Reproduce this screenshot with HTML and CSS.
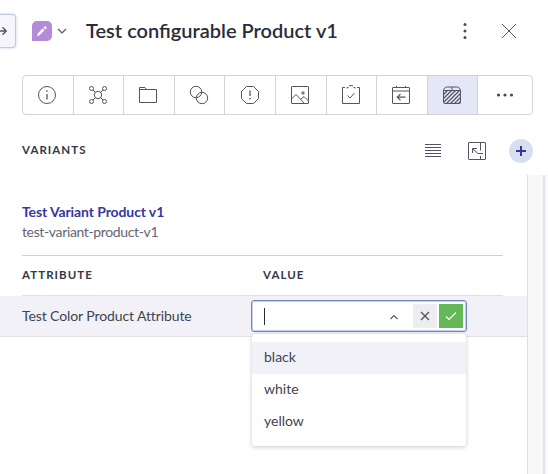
FILE: index.html
```html
<!DOCTYPE html>
<html lang="en">
<head>
<meta charset="utf-8">
<title>Test configurable Product v1</title>
<link rel="stylesheet" href="styles.css">
</head>
<body>
<header class="header">
  <button class="collapse"><svg width="10" height="12" viewBox="0 0 10 12"><path d="M0 6h8M4.500 2.200 8.300 6 4.500 9.800" stroke-width="1.300"/></svg></button>
  <span class="badge"><svg width="20" height="20" viewBox="0 0 20 20"><path class="white" d="M5 15l.8-2.600 4.800-4.800 1.800 1.800-4.800 4.800zM11.400 6.800l1.300-1.300q.5-.4 1 0l.8.8q.4.500 0 1L13.200 8.600z"/></svg></span>
  <svg class="chevron" width="10" height="6" viewBox="0 0 10 6"><path d="M1 1l4 4 4-4" stroke-width="1.200"/></svg>
  <h1 class="title">Test configurable Product v1</h1>
  <svg class="more" width="4" height="18" viewBox="0 0 4 18"><g class="solid"><circle cx="2" cy="2.500" r="1.500"/><circle cx="2" cy="9" r="1.500"/><circle cx="2" cy="15.500" r="1.500"/></g></svg>
  <svg class="close" width="16" height="16" viewBox="0 0 16 16"><path d="M1 1l14 14M15 1 1 15"/></svg>
</header>

<nav class="tabs">
  <span class="tab"><svg width="20" height="20" viewBox="0 0 20 20"><circle cx="10" cy="10" r="8.500"/><path d="M10 9v5.500" stroke-width="1.300"/><path d="M10 5.300v1.400" stroke-width="1.300"/></svg></span>
  <span class="tab"><svg width="20" height="20" viewBox="0 0 20 20"><circle cx="10" cy="10" r="3.700"/><circle cx="3.500" cy="3.500" r="2"/><circle cx="16.500" cy="3.500" r="2"/><circle cx="3.500" cy="16.500" r="2"/><circle cx="16.500" cy="16.500" r="2"/><path d="M5 5l2.400 2.400M15 5l-2.400 2.400M5 15l2.400-2.400M15 15l-2.400-2.400"/></svg></span>
  <span class="tab"><svg width="20" height="20" viewBox="0 0 20 20"><path d="M1.500 17.500v-15h5.500l1.500 2h10v13zM1.500 4.500h7"/></svg></span>
  <span class="tab"><svg width="20" height="20" viewBox="0 0 20 20"><circle cx="7" cy="7" r="5.700"/><circle cx="13" cy="13" r="5.700"/></svg></span>
  <span class="tab"><svg width="20" height="20" viewBox="0 0 20 20"><path d="M6.500 1.500h7l5 5v7l-5 5h-7l-5-5v-7z"/><path d="M10 5.500v5.500M10 13v1.500" stroke-width="1.300"/></svg></span>
  <span class="tab"><svg width="20" height="20" viewBox="0 0 20 20"><rect x="1.500" y="1.500" width="17" height="17" rx=".5"/><path d="M1.500 14 6 9.500l8.500 9M11 14l3-2.500 4.500 4.500"/><circle class="solid" cx="13" cy="8" r="1.700" opacity=".75"/></svg></span>
  <span class="tab"><svg width="20" height="20" viewBox="0 0 20 20"><path d="M4 2.500H1.500v16h17v-16H16M6 3.500V2.500h1.500M14 3.500V2.500h-1.500M8 .7h4"/><path d="M6.500 10.500 9 13l4.500-5"/></svg></span>
  <span class="tab"><svg width="20" height="20" viewBox="0 0 20 20"><rect x="1.500" y="2.500" width="17" height="16" rx=".5"/><path d="M1.500 6h17M5.500 1v1.500M14.500 1v1.500"/><path d="M14.500 12.200H6.500M9.500 9l-3.200 3.200 3.200 3.200" stroke-width="1.200"/></svg></span>
  <span class="tab active"><svg width="20" height="20" viewBox="0 0 20 20"><path d="M1.500 5.500v12q0 1 1 1h15q1 0 1-1v-12zM1.500 5.500q0-2.500 3-3.500h11q3 1 3 3.500M10 2v3.500"/><path d="M1.500 9.500l4-4M1.500 13.500l8-8M1.500 17.500l12-12M4.500 18.500l13-13M8.500 18.500l10-10M12.500 18.500l6-6M16.500 18.500l2-2" stroke-width="1.200"/></svg></span>
  <span class="tab last"><svg width="20" height="20" viewBox="0 0 20 20"><g class="solid"><circle cx="3.500" cy="10" r="1.600"/><circle cx="10" cy="10" r="1.600"/><circle cx="16.500" cy="10" r="1.600"/></g></svg></span>
</nav>

<div class="section">
  <h2 class="label variants">VARIANTS</h2>
  <svg class="lines" width="16" height="14" viewBox="0 0 16 14"><path d="M0 .5h16M0 3.500h16M0 6.500h16M0 9.500h16M0 12.500h16"/></svg>
  <svg class="split" width="20" height="20" viewBox="0 0 20 20"><rect x="1.500" y="1.500" width="17" height="17" rx=".5"/><path d="M13.500 1.500v8M13.500 15v3.500M5.500 12v-4.500h4.500M5.500 7.500l5.500 5h5"/></svg>
  <button class="add"><svg width="10" height="10" viewBox="0 0 10 10"><path d="M5 0v10M0 5h10"/></svg></button>
</div>

<main class="body">
  <div class="content">
    <div class="product">
      <a class="name">Test Variant Product v1</a>
      <span class="slug">test-variant-product-v1</span>
    </div>
    <div class="thead"><span class="label attribute">ATTRIBUTE</span><span class="label value">VALUE</span></div>
    <div class="row">
      <span class="attr">Test Color Product Attribute</span>
      <div class="field">
        <span class="caret"></span>
        <svg class="up" width="10" height="6" viewBox="0 0 10 6"><path d="M1.500 5 5 1.500 8.500 5" stroke-width="1.100"/></svg>
        <button class="cancel"><svg width="10" height="10" viewBox="0 0 10 10"><path d="M1 1l8 8M9 1 1 9" stroke-width="1.400"/></svg></button>
        <button class="ok"><svg width="12" height="10" viewBox="0 0 12 10"><path d="M1 5.500 4 8.500 11 1.500" stroke-width="1.200"/></svg></button>
        <ul class="menu">
          <li class="option selected">black</li>
          <li class="option">white</li>
          <li class="option">yellow</li>
        </ul>
      </div>
    </div>
  </div>
  <div class="track"></div>
</main>
</body>
</html>
```

FILE: styles.css
```css
* { box-sizing: border-box; }
body {
  margin: 0;
  width: 548px;
  height: 474px;
  display: flex;
  flex-direction: column;
  overflow: hidden;
  background: #fff;
  color: #414352;
  font-family: Lato, sans-serif;
  font-size: 14px;
}
svg { display: block; flex: none; fill: none; stroke: #555463; stroke-width: 1; }
button { border: 0; padding: 0; margin: 0; display: flex; align-items: center; justify-content: center; flex: none; }
h1, h2, ul { margin: 0; padding: 0; }
.solid { fill: #4b4a59; stroke: none; }
.white { fill: #fff; stroke: none; }

.header { height: 62px; display: flex; align-items: center; flex: none; }
.collapse {
  width: 17px;
  height: 34px;
  margin-left: -1px;
  justify-content: flex-start;
  background: #f6f5fb;
  border: 1px solid #bec8e8;
  border-left: 0;
  border-radius: 0 4px 4px 0;
  box-shadow: 0 0 3px #c4cdeb;
}
.collapse svg { margin-left: -1px; }
.badge { width: 20px; height: 20px; margin-left: 16px; background: #b48bd8; border-radius: 5px 5px 5px 0; }
.chevron { margin-left: 5px; }
.title { margin-left: 19px; width: 260px; padding-bottom: 2px; font-size: 20px; line-height: 24px; font-weight: 600; color: #2b2c3b; white-space: nowrap; letter-spacing: 0; }
.more { margin-left: 117px; }
.close { margin-left: 34px; }

.tabs { margin: 13px 0 0 22px; width: 511px; height: 40px; display: flex; flex: none; border: 1px solid #d3d3de; border-radius: 4px; overflow: hidden; }
.tab { width: 50.600px; padding-right: 1px; display: flex; align-items: center; justify-content: center; border-right: 1px solid #d3d3de; flex: none; }
.tab.active { background: #e4e7f6; }
.tab.last { flex: 1; padding: 0; border: 0; }

.section { height: 60px; padding: 12px 0 0 22px; display: flex; align-items: center; flex: none; }
.label { padding-bottom: 2px; font-size: 11.500px; line-height: 16px; font-weight: 700; letter-spacing: 1.050px; color: #353746; }
.variants { width: 403px; }
.split { margin-left: 26px; }
.add { margin-left: 22px; width: 24px; height: 24px; border-radius: 50%; background: #d9dff2; }
.add svg { stroke: #34379b; stroke-width: 2; }

.body { flex: 1; display: flex; min-height: 0; }
.content { width: 527px; flex: none; }
.track { flex: 1; background: #f8f8f8; border-left: 1px solid #dedee2; display: flex; }
.track::before { content: ""; width: 15px; border-right: 2px solid #e3e3e5; }
.product { margin: 27px 24px 0 22px; height: 54px; border-bottom: 1px solid #d0d0dc; display: flex; flex-direction: column; align-items: flex-start; white-space: nowrap; }
.name { font-weight: 700; line-height: 20px; letter-spacing: -.1px; color: #3438a0; }
.slug { line-height: 20px; letter-spacing: -.36px; color: #656573; }
.thead { height: 40px; margin: 0 24px 0 22px; display: flex; align-items: center; border-bottom: 1px solid #dedee7; }
.attribute { width: 241px; }
.row { height: 41px; display: flex; align-items: center; padding-left: 22px; background: #f2f1f7; border-bottom: 1px solid #e2e1e9; }
.attr { width: 229px; padding-bottom: 2px; letter-spacing: -.1px; white-space: nowrap; }
.field { position: relative; width: 216px; height: 32px; display: flex; align-items: center; background: #fff; border: 1px solid #6f86cc; border-radius: 3px; box-shadow: inset 0 0 0 1px #c5d0ef; }
.caret { width: 1px; height: 17px; margin-left: 12px; background: #292a39; }
.up { margin: 2px 0 0 124px; }
.cancel { width: 24px; height: 24px; margin-left: 14px; background: #ededf2; }
.ok { width: 24px; height: 24px; margin-left: 2px; background: #64b856; }
.ok svg { stroke: #fff; }
.menu { position: absolute; left: 0; top: 33px; width: 214px; height: 112px; padding-top: 8px; list-style: none; background: #fff; border-radius: 3px; box-shadow: 0 1px 4px rgba(40, 40, 70, .25); }
.option { height: 32px; padding-left: 12px; line-height: 30px; }
.selected { background: #f2f1f7; }
```
